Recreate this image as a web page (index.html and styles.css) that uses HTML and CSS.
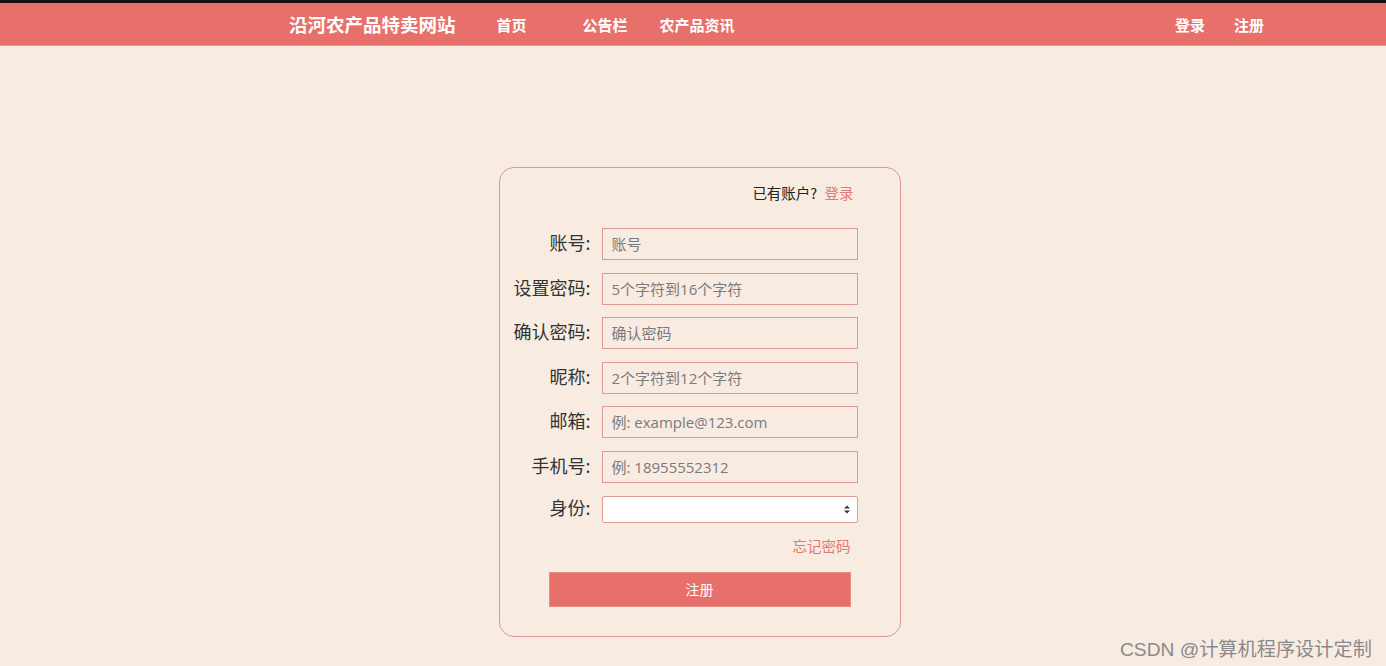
FILE: index.html
```html
<!DOCTYPE html>
<html lang="zh">
<head>
<meta charset="utf-8">
<title>沿河农产品特卖网站 - 注册</title>
<link rel="stylesheet" href="styles.css">
</head>
<body>
<div class="topline"></div>
<header class="header">
  <div class="brand">沿河农产品特卖网站</div>
  <nav class="nav">
    <a class="nav-home">首页</a>
    <a class="nav-notice">公告栏</a>
    <a>农产品资讯</a>
  </nav>
  <div class="auth">
    <a>登录</a>
    <a>注册</a>
  </div>
</header>
<main class="main">
  <form class="card">
    <div class="have-account">已有账户? <a class="link">登录</a></div>
    <div class="row"><label>账号:</label><input class="field" placeholder="账号"></div>
    <div class="row"><label>设置密码:</label><input class="field" placeholder="5个字符到16个字符"></div>
    <div class="row"><label>确认密码:</label><input class="field" placeholder="确认密码"></div>
    <div class="row"><label>昵称:</label><input class="field" placeholder="2个字符到12个字符"></div>
    <div class="row"><label>邮箱:</label><input class="field" placeholder="例: example@123.com"></div>
    <div class="row"><label>手机号:</label><input class="field" placeholder="例: 18955552312"></div>
    <div class="row row-select"><label>身份:</label>
      <div class="select"><span class="arrows"><svg width="6" height="9" viewBox="0 0 6 9"><path d="M0 3.5 L3 0.5 L6 3.5Z M0 5.5 L3 8.5 L6 5.5Z" fill="#333"/></svg></span></div>
    </div>
    <div class="forgot"><a class="link">忘记密码</a></div>
    <button type="button" class="submit">注册</button>
  </form>
</main>
<div class="watermark">CSDN @计算机程序设计定制</div>
</body>
</html>
```
FILE: styles.css
```css
* { box-sizing: border-box; }
html, body { margin: 0; padding: 0; }
body {
  background: #f8ebe1;
  font-family: "Noto Sans CJK SC", "Open Sans", sans-serif;
  height: 666px;
  overflow: hidden;
  position: relative;
}
.topline { height: 3px; background: #111; }
.header {
  height: 43px;
  background: #e7706a;
  border-bottom: 1px solid #ed9a8c;
  display: flex;
  align-items: center;
  padding-left: 289px;
  padding-right: 122px;
  color: #fff;
  font-weight: bold;
}
.brand { font-size: 18.5px; }
.nav { display: flex; font-size: 15px; margin-left: 41px; }
.nav a { display: block; }
.nav-home { width: 86px; }
.nav-notice { width: 77px; }
.auth { margin-left: auto; display: flex; gap: 29px; font-size: 15px; }
.main {
  display: flex;
  justify-content: center;
  padding-top: 121px;
  padding-left: 13px;
}
.card {
  width: 402px;
  height: 470px;
  border: 1px solid #dc9893;
  border-radius: 15px;
  padding: 14px 42px 0 0;
  display: flex;
  flex-direction: column;
}
.have-account {
  text-align: right;
  font-size: 14.5px;
  color: #222;
  height: 22px;
  line-height: 22px;
  margin-bottom: 24px;
  padding-right: 4px;
}
.link { color: #e27a71; margin-left: 4px; }
.row {
  display: flex;
  align-items: center;
  justify-content: flex-end;
  height: 32px;
  margin-bottom: 12.6px;
}
.row label {
  font-size: 18px;
  color: #333;
  margin-right: 11px;
  padding-bottom: 4px;
}
.field {
  width: 256px;
  height: 32px;
  border: 1px solid #dd9a94;
  background: #f8ebe1;
  padding: 0 9px;
  font-family: "Open Sans", "Noto Sans CJK SC", sans-serif;
  font-size: 15px;
  color: #333;
  outline: none;
}
.field::placeholder { color: #7a7a7a; }
.row-select { height: 27px; margin-bottom: 0; }
.select {
  width: 256px;
  height: 27px;
  border: 1px solid #dd9a94;
  background: #fff;
  border-radius: 2px;
  display: flex;
  align-items: center;
  justify-content: flex-end;
  padding-right: 7px;
}
.arrows { display: flex; }
.forgot {
  text-align: right;
  font-size: 14.5px;
  padding-right: 7px;
  margin-top: 12px;
  height: 22px;
  line-height: 22px;
}
.submit {
  margin: 15px 0 0 49px;
  width: 302px;
  height: 35px;
  background: #e7706a;
  border: 1px solid #eb8c84;
  color: #fff;
  font-family: "Noto Sans CJK SC", sans-serif;
  font-size: 14px;
}
.watermark {
  position: absolute;
  left: 1120px;
  top: 634px;
  font-size: 19.2px;
  color: #8a8a8a;
  font-family: "Liberation Sans", "Noto Sans CJK SC", sans-serif;
}
```
